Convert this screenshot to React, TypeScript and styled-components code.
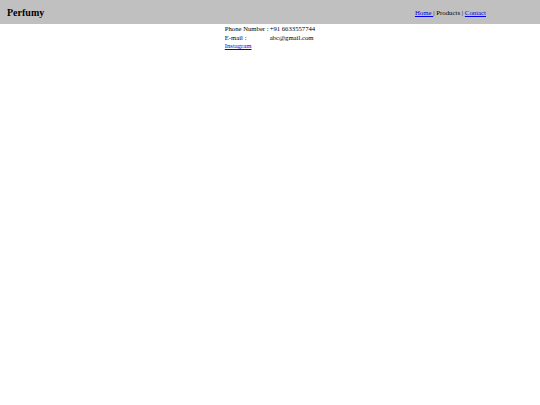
import React from "react";
import styled, { createGlobalStyle } from "styled-components";

const GlobalStyle = createGlobalStyle`
  body {
    margin: 0;
    background: #ffffff;
    font-family: "Liberation Serif", "Times New Roman", serif;
    color: #000000;
  }
`;

const Header = styled.header`
  display: flex;
  align-items: center;
  justify-content: space-between;
  height: 24px;
  padding: 0 54px 0 7px;
  background-color: #c0c0c0;
`;

const Brand = styled.h1`
  margin: 0;
  font-size: 10px;
  font-weight: bold;
`;

const Nav = styled.nav`
  font-size: 6.8px;
  padding-top: 1px;
  white-space: nowrap;
`;

const NavLink = styled.a`
  color: #0000ee;
  text-decoration: underline;
`;

const Contact = styled.div`
  display: grid;
  grid-template-columns: auto auto;
  column-gap: 1px;
  width: fit-content;
  margin: 0 auto;
  padding-top: 1px;
  font-size: 6.7px;
  line-height: 8.5px;
  white-space: nowrap;
`;

const Link = styled.a`
  grid-column: 1 / span 2;
  color: #0000ee;
  text-decoration: underline;
`;

const App: React.FC = () => {
  return (
    <>
      <GlobalStyle />
      <Header>
        <Brand>Perfumy</Brand>
        <Nav>
          <NavLink href="#">Home </NavLink>| Products |{" "}
          <NavLink href="#">Contact</NavLink>
        </Nav>
      </Header>
      <Contact>
        <span>Phone Number :</span>
        <span>+91 6633557744</span>
        <span>E-mail :</span>
        <span>abc@gmail.com</span>
        <Link href="#">Instagram</Link>
      </Contact>
    </>
  );
};

export default App;
